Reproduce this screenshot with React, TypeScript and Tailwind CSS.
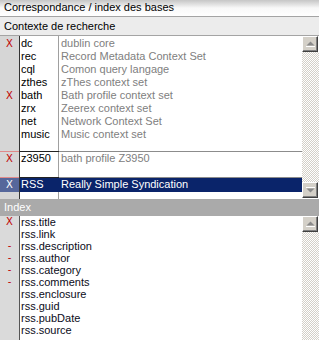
import React from 'react';

type Ctx = { mark?: boolean; code: string; label: string };

const groups: { rows: Ctx[]; pad: string; selected?: boolean }[] = [
  {
    pad: 'h-[10px]',
    rows: [
      { mark: true, code: 'dc', label: 'dublin core' },
      { code: 'rec', label: 'Record Metadata Context Set' },
      { code: 'cql', label: 'Comon query langage' },
      { code: 'zthes', label: 'zThes context set' },
      { mark: true, code: 'bath', label: 'Bath profile context set' },
      { code: 'zrx', label: 'Zeerex context set' },
      { code: 'net', label: 'Network Context Set' },
      { code: 'music', label: 'Music context set' },
    ],
  },
  { pad: 'h-[12px]', rows: [{ mark: true, code: 'z3950', label: 'bath profile Z3950' }] },
  { pad: 'h-0', selected: true, rows: [{ mark: true, code: 'RSS', label: 'Really Simple Syndication' }] },
];

const indexRows: { mark?: 'x' | '-'; name: string }[] = [
  { mark: 'x', name: 'rss.title' },
  { name: 'rss.link' },
  { mark: '-', name: 'rss.description' },
  { mark: '-', name: 'rss.author' },
  { mark: '-', name: 'rss.category' },
  { mark: '-', name: 'rss.comments' },
  { name: 'rss.enclosure' },
  { name: 'rss.guid' },
  { name: 'rss.pubDate' },
  { name: 'rss.source' },
];

const Arrow = ({ down }: { down?: boolean }) => (
  <svg width="9" height="6" viewBox="0 0 9 6" className={down ? 'rotate-180' : ''}>
    <path d="M4.5 0.5 L8.5 4.5 L0.5 4.5 Z" fill="#8a8a8a" />
    <path d="M0 5.5 H9" stroke="#ffffff" strokeWidth="1" />
  </svg>
);

const ScrollButton = ({ down }: { down?: boolean }) => (
  <div className="h-[16px] w-[16px] shrink-0 flex items-center justify-center bg-[#d4d0c8] border border-t-white border-l-white border-r-[#404040] border-b-[#404040] shadow-[inset_-1px_-1px_0_#808080]">
    <Arrow down={down} />
  </div>
);

const Track = () => (
  <div className="flex-1 bg-[repeating-conic-gradient(#d4d0c8_0%_25%,#ffffff_0%_50%)] bg-[length:2px_2px]" />
);

export default function App() {
  return (
    <div className="w-[319px] h-[340px] overflow-hidden bg-white flex flex-col font-['Liberation_Sans',Arial,sans-serif] text-[11px] text-black">
      {/* Title */}
      <div className="h-[17px] shrink-0 px-[4px] leading-[15px] border-b border-[#a4a4a4] bg-gradient-to-b from-[#c6c6c6] via-[#f8f8f8] to-white">
        Correspondance / index des bases
      </div>

      {/* Contexte header */}
      <div className="h-[19px] shrink-0 px-[4px] leading-[18px] bg-[#ececec] border-b border-[#a4a4a4]">
        Contexte de recherche
      </div>

      {/* Context list */}
      <div className="h-[163px] shrink-0 flex">
        <div className="flex-1 flex flex-col">
          <div className="h-[1px] flex">
            <div className="w-[20px] bg-[#d6d6d6] border-r border-[#333]" />
            <div className="w-[39px] border-r border-[#a0a0a0]" />
          </div>
          {groups.map((g, gi) => (
            <div key={gi} className={gi > 0 ? 'flex flex-col' : 'flex flex-col'}>
              {gi > 0 && (
                <div className="h-[1px] flex">
                  <div className="w-[19px] bg-[#e08a8a]" />
                  <div className="w-[1px] bg-[#333]" />
                  <div className="w-[39px] bg-[#222]" />
                  <div className="flex-1 bg-[#8c8c8c]" />
                </div>
              )}
              {g.rows.map((r) => (
                <div key={r.code} className={`flex ${g.selected ? 'h-[14px]' : 'h-[13px]'} leading-[13px]`}>
                  <div
                    className={`w-[20px] shrink-0 text-center border-r border-[#333] ${
                      g.selected ? 'bg-[#56679b] text-white' : 'bg-[#d6d6d6] text-[#c00000]'
                    } font-['DejaVu_Sans',sans-serif] text-[10px]`}
                  >
                    {r.mark ? 'X' : ''}
                  </div>
                  <div
                    className={`w-[39px] shrink-0 pl-[1px] border-r ${
                      g.selected ? 'bg-[#0a246a] text-white border-[#0a246a]' : 'border-[#a0a0a0]'
                    }`}
                  >
                    {r.code}
                  </div>
                  <div
                    className={`flex-1 pl-[2px] whitespace-nowrap overflow-hidden ${
                      g.selected ? 'bg-[#0a246a] text-white' : 'text-[#808080]'
                    }`}
                  >
                    {r.label}
                  </div>
                </div>
              ))}
              <div className={`${g.pad} flex`}>
                <div className="w-[20px] bg-[#d6d6d6] border-r border-[#333]" />
                <div className="w-[39px] border-r border-[#a0a0a0]" />
              </div>
            </div>
          ))}
          <div className="flex-1 flex">
            <div className="w-[20px] bg-[#d6d6d6] border-r border-[#333]" />
            <div className="w-[39px] border-r border-[#a0a0a0]" />
          </div>
        </div>
        <div className="w-[17px] flex flex-col">
          <ScrollButton />
          <Track />
          <ScrollButton down />
          <div className="h-[1px] bg-white" />
        </div>
      </div>

      {/* Index header */}
      <div className="h-[17px] shrink-0 px-[4px] leading-[17px] bg-[#aaaaaa] text-white">Index</div>

      {/* Index list */}
      <div className="flex-1 flex min-h-0">
        <div className="flex-1 flex">
          <div className="w-[20px] bg-[#dadada] border-r border-[#555] flex flex-col">
            {indexRows.map((r) => (
              <div key={r.name} className="h-[12px] leading-[12px] text-center text-[#c00000] font-['DejaVu_Sans',sans-serif] text-[10px]">
                {r.mark === 'x' ? 'X' : r.mark === '-' ? '-' : ''}
              </div>
            ))}
          </div>
          <div className="flex-1 flex flex-col pl-[1px]">
            {indexRows.map((r) => (
              <div key={r.name} className="h-[12px] leading-[12px] text-[#0b0b20]">
                {r.name}
              </div>
            ))}
          </div>
        </div>
        <div className="w-[17px] flex flex-col">
          <ScrollButton />
          <Track />
        </div>
      </div>
    </div>
  );
}
